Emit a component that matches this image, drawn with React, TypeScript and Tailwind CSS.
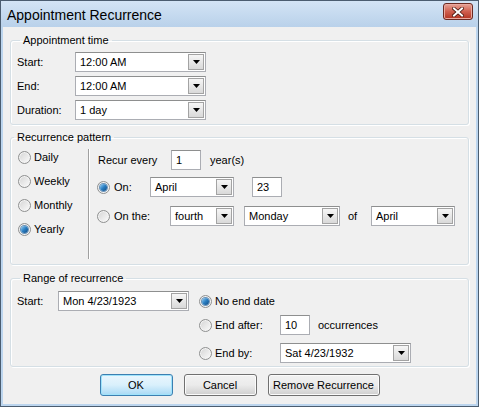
import * as React from "react";

// small win-vista style widgets

function Arrow() {
  return (
    <svg width="7" height="4" viewBox="0 0 7 4">
      <path d="M0 0h7L3.5 4z" fill="#000" />
    </svg>
  );
}

function Select({ value, w }: { value: string; w: string }) {
  return (
    <div className={`flex h-[20px] items-stretch border border-[#abadb3] border-t-[#8e8f8f] bg-white ${w}`}>
      <span className="flex flex-1 items-center pl-[4px] leading-none">{value}</span>
      <div className="m-px flex w-[16px] items-center justify-center border border-[#a3a3a3] bg-gradient-to-b from-[#f6f6f6] to-[#d9d9d9]">
        <Arrow />
      </div>
    </div>
  );
}

function TextBox({ value, w }: { value: string; w: string }) {
  return (
    <div className={`flex h-[20px] items-center border border-[#abadb3] border-t-[#8e8f8f] bg-white pl-[4px] leading-none ${w}`}>
      {value}
    </div>
  );
}

function Radio({ checked = false }: { checked?: boolean }) {
  return (
    <div className="flex h-[13px] w-[13px] shrink-0 items-center justify-center rounded-full border border-[#8f9090] bg-gradient-to-br from-[#d4d4d4] to-[#fcfcfc] shadow-[inset_0_0_0_1px_#f4f4f4]">
      {checked && (
        <div className="h-[7px] w-[7px] rounded-full bg-gradient-to-br from-[#8fd0f7] via-[#2a7ec1] to-[#0f4a85] shadow-[0_0_0_1px_#6b93b8]" />
      )}
    </div>
  );
}

function Group({ title, className, children }: { title: string; className: string; children: React.ReactNode }) {
  return (
    <fieldset
      className={`mx-[7px] rounded-[3px] border border-[#d5dfe5] shadow-[inset_1px_1px_0_#fff,1px_1px_0_#fff] ${className}`}
    >
      <legend className="ml-[3px] px-[3px] leading-[14px]">{title}</legend>
      {children}
    </fieldset>
  );
}

function Button({ label, w, primary = false }: { label: string; w: string; primary?: boolean }) {
  return (
    <div
      className={
        primary
          ? `flex h-[22px] items-center justify-center rounded-[3px] border border-[#3c7fb1] bg-gradient-to-b from-[#eaf6fd] via-[#d9f0fc] to-[#a7d9f5] shadow-[inset_0_0_0_1px_#9fe3fb] ${w}`
          : `flex h-[22px] items-center justify-center rounded-[3px] border border-[#707070] bg-gradient-to-b from-[#f2f2f2] via-[#ebebeb] to-[#cfcfcf] shadow-[inset_0_0_0_1px_#fbfbfb] ${w}`
      }
    >
      {label}
    </div>
  );
}

export default function App() {
  return (
    <div className="h-[407px] w-[479px] border border-[#4b5d70] bg-[#bcd5ee] font-['Liberation_Sans',Arial,sans-serif] text-[11px] text-black">
      <div className="flex h-full flex-col">
        {/* title bar */}
        <div className="flex h-[26px] shrink-0 items-center bg-gradient-to-b from-[#d3e4f5] to-[#b9d1ea] pl-[6px] pr-[5px]">
          <span className="flex-1 pt-[1px] text-[14px] leading-none text-black">Appointment Recurrence</span>
          <div className="mb-[5px] flex h-[17px] w-[30px] items-center justify-center rounded-[3px] border border-[#6b2a22] bg-gradient-to-b from-[#e6a397] via-[#cf5f4f] to-[#b3321f] shadow-[inset_0_0_0_1px_#eaa99f]">
            <svg width="12" height="10" viewBox="0 0 12 10">
              <path d="M2 1.5l8 7M10 1.5l-8 7" stroke="#4a1810" strokeWidth="3.6" strokeLinecap="square" />
              <path d="M2 1.5l8 7M10 1.5l-8 7" stroke="#fff" strokeWidth="2" strokeLinecap="square" />
            </svg>
          </div>
        </div>

        {/* body */}
        <div className="flex flex-1 flex-col px-[2px] pb-[2px]">
          <div className="flex flex-1 flex-col bg-[#f0f0f0]">
            <Group title="Appointment time" className="mt-[6px] pb-[4px] pl-[6px] pt-[5px]">
              <div className="flex flex-col gap-[4px]">
                <div className="flex items-center">
                  <span className="w-[58px]">Start:</span>
                  <Select value="12:00 AM" w="w-[131px]" />
                </div>
                <div className="flex items-center">
                  <span className="w-[58px]">End:</span>
                  <Select value="12:00 AM" w="w-[131px]" />
                </div>
                <div className="flex items-center">
                  <span className="w-[58px]">Duration:</span>
                  <Select value="1 day" w="w-[131px]" />
                </div>
              </div>
            </Group>

            <Group title="Recurrence pattern" className="mt-[5px] pb-[5px]">
              <div className="flex">
                <div className="flex w-[77px] flex-col pl-[7px] pt-[1px]">
                  {[
                    ["Daily", false],
                    ["Weekly", false],
                    ["Monthly", false],
                    ["Yearly", true],
                  ].map(([label, on]) => (
                    <div key={label as string} className="flex h-[24px] items-center gap-[3px]">
                      <Radio checked={on as boolean} />
                      <span>{label as string}</span>
                    </div>
                  ))}
                </div>
                <div className="mt-[5px] h-[110px] w-px bg-[#a0a0a0] shadow-[1px_0_0_#fff]" />
                <div className="ml-[8px] flex flex-col pt-[6px]">
                  <div className="flex items-center">
                    <span className="w-[74px] pl-px">Recur every</span>
                    <TextBox value="1" w="w-[30px]" />
                    <span className="ml-[9px]">year(s)</span>
                  </div>
                  <div className="mt-[7px] flex items-center">
                    <div className="flex w-[53px] items-center gap-[4px]">
                      <Radio checked />
                      <span>On:</span>
                    </div>
                    <Select value="April" w="w-[84px]" />
                    <TextBox value="23" w="ml-[18px] w-[30px]" />
                  </div>
                  <div className="mt-[9px] flex items-center">
                    <div className="flex w-[73px] items-center gap-[4px]">
                      <Radio />
                      <span>On the:</span>
                    </div>
                    <Select value="fourth" w="w-[64px]" />
                    <Select value="Monday" w="ml-[10px] w-[96px]" />
                    <span className="ml-[8px] w-[23px]">of</span>
                    <Select value="April" w="w-[84px]" />
                  </div>
                </div>
              </div>
            </Group>

            <Group title="Range of recurrence" className="mt-[6px] pb-[3px] pl-[6px] pt-[6px]">
              <div className="flex items-start">
                <div className="flex items-center">
                  <span className="w-[41px]">Start:</span>
                  <Select value="Mon 4/23/1923" w="w-[131px]" />
                </div>
                <div className="ml-[10px] flex flex-col">
                  <div className="flex h-[20px] items-center gap-[3px]">
                    <Radio checked />
                    <span>No end date</span>
                  </div>
                  <div className="mt-[4px] flex items-center">
                    <div className="flex w-[81px] items-center gap-[3px]">
                      <Radio />
                      <span>End after:</span>
                    </div>
                    <TextBox value="10" w="w-[30px]" />
                    <span className="ml-[8px]">occurrences</span>
                  </div>
                  <div className="mt-[8px] flex items-center">
                    <div className="flex w-[81px] items-center gap-[3px]">
                      <Radio />
                      <span>End by:</span>
                    </div>
                    <Select value="Sat 4/23/1932" w="w-[131px]" />
                  </div>
                </div>
              </div>
            </Group>

            <div className="mt-[7px] flex justify-center gap-[11px]">
              <Button label="OK" w="w-[73px]" primary />
              <Button label="Cancel" w="w-[73px]" />
              <Button label="Remove Recurrence" w="w-[112px]" />
            </div>
          </div>
        </div>
      </div>
    </div>
  );
}
